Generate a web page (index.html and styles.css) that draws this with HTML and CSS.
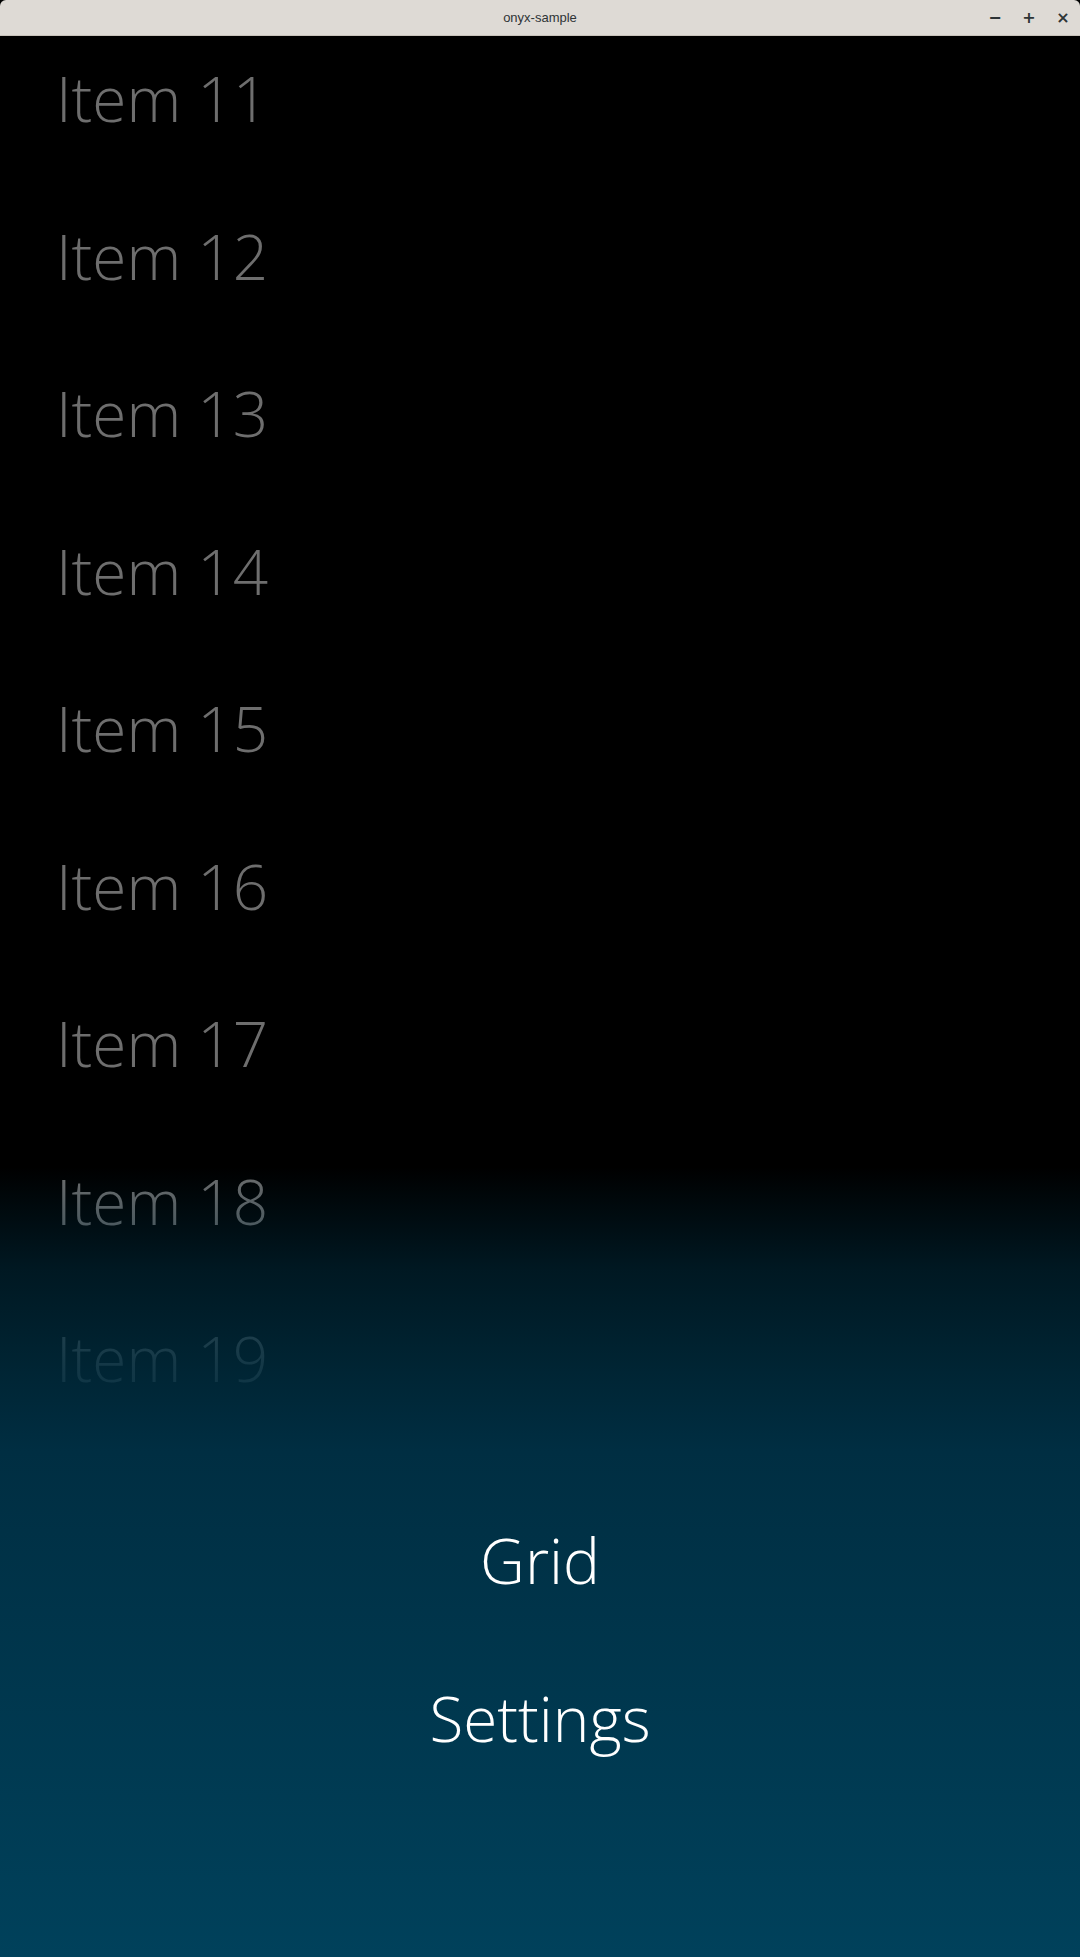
FILE: index.html
```html
<!DOCTYPE html>
<html lang="en">
<head>
    <meta charset="UTF-8">
    <meta name="viewport" content="width=device-width, initial-scale=1.0">
    <title>onyx-sample</title>
    <link rel="stylesheet" href="styles.css">
</head>
<body>
    <div class="window">
        <div class="titlebar">
            <div class="title">onyx-sample</div>
            <div class="controls">
                <span class="ctl">&minus;</span>
                <span class="ctl">+</span>
                <span class="ctl">&times;</span>
            </div>
        </div>

        <div class="screen">
            <!-- scrolled list, offset is the scroll position -->
            <div class="list">
                <div class="item">Item 11</div>
                <div class="item">Item 12</div>
                <div class="item">Item 13</div>
                <div class="item">Item 14</div>
                <div class="item">Item 15</div>
                <div class="item">Item 16</div>
                <div class="item">Item 17</div>
                <div class="item">Item 18</div>
                <div class="item">Item 19</div>
                <div class="item">Item 20</div>
            </div>

            <!-- menu panel fades in over the list -->
            <div class="menu">
                <div class="menu-item">Grid</div>
                <div class="menu-item">Settings</div>
            </div>
        </div>
    </div>
</body>
</html>
```

FILE: styles.css
```css
body {
    margin: 0;
    padding: 0;
    background: #000;
    font-family: "Open Sans", "Noto Sans", sans-serif;
}

.window {
    display: flex;
    flex-direction: column;
    height: 1957px;
}

.titlebar {
    height: 35px;
    flex: none;
    display: flex;
    align-items: center;
    justify-content: center;
    position: relative;
    background: #dedad5;
    border-bottom: 1px solid #c8c2ba;
    border-radius: 6px 6px 0 0;
}

.title {
    font-family: "Liberation Sans", sans-serif;
    font-size: 13px;
    color: #2e3436;
}

.controls {
    position: absolute;
    right: 8px;
    top: 0;
    bottom: 0;
    display: flex;
    align-items: center;
    gap: 16px;
}

.ctl {
    width: 18px;
    text-align: center;
    font-family: "DejaVu Sans", sans-serif;
    font-size: 16px;
    font-weight: bold;
    color: #2e3436;
}

.screen {
    flex: 1;
    position: relative;
    overflow: hidden;
    background: #000;
}

.list {
    transform: translateY(-16px);
    padding-left: 56px;
}

.item {
    height: 157.5px;
    line-height: 157.5px;
    font-size: 62px;
    font-weight: 300;
    color: #6e6e6e;
}

.menu {
    position: absolute;
    left: 0;
    right: 0;
    bottom: 0;
    height: 790px;
    display: flex;
    flex-direction: column;
    align-items: center;
    justify-content: flex-end;
    padding-bottom: 160px;
    box-sizing: border-box;
    background: linear-gradient(180deg,
        rgba(0, 44, 62, 0) 0%,
        rgba(0, 44, 62, 0.55) 13%,
        rgba(0, 44, 62, 0.82) 25%,
        rgba(0, 46, 66, 1) 36%,
        #00415b 100%);
}

.menu-item {
    height: 157.5px;
    line-height: 157.5px;
    font-size: 62px;
    font-weight: 300;
    color: #fff;
}
```
